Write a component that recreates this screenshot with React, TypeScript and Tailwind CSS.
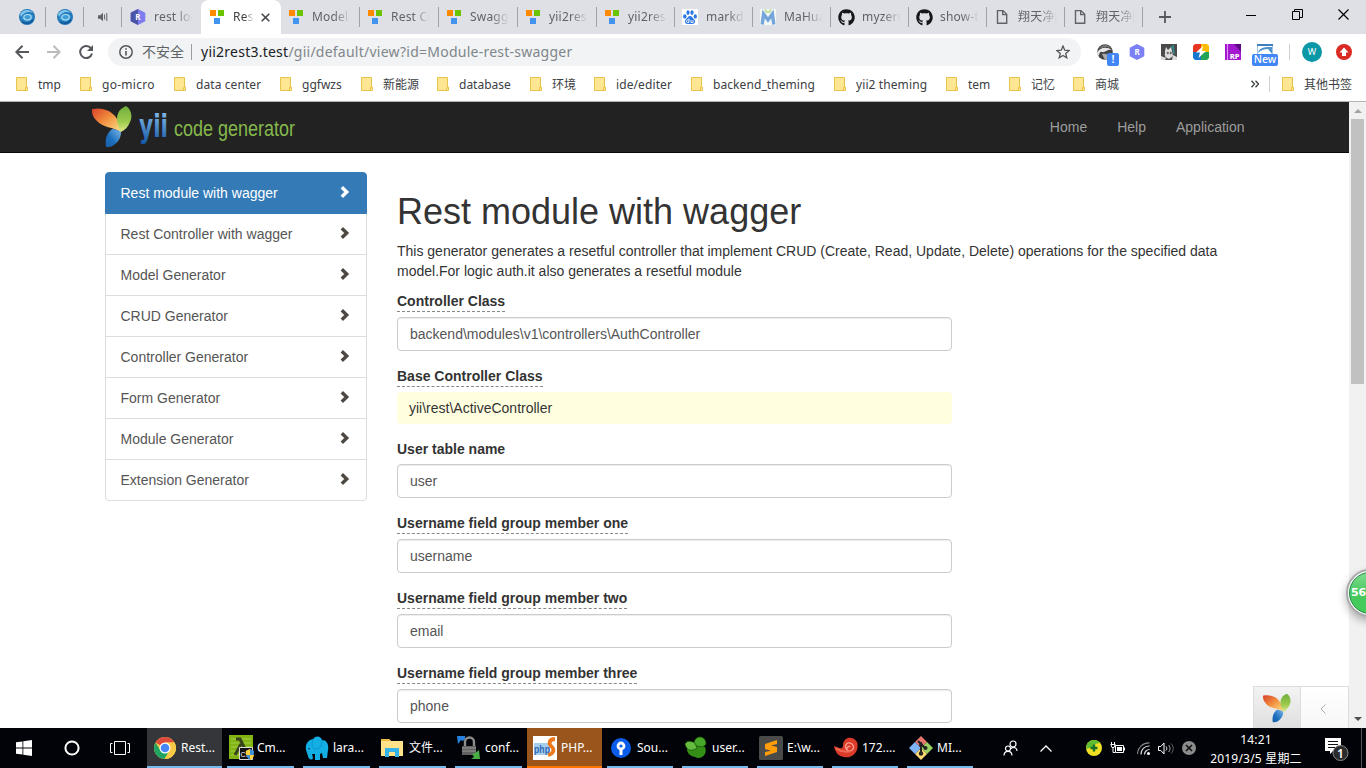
import React from 'react';
import { FaGithub } from 'react-icons/fa';

const UI = "font-['Noto_Sans','Noto_Sans_CJK_SC',sans-serif]";

/* ---------- favicons ---------- */
const Globe = () => (
  <svg width="16" height="16" viewBox="0 0 16 16">
    <circle cx="8" cy="8" r="8" fill="#2478b8" />
    <path d="M1 5C4 0 11 0 14 4C10 2 5 3 2 8Z" fill="#7fc4ec" />
    <path d="M2 10C4 5 10 3 14 7C13 12 8 14 5 11" fill="#3f9bd4" />
    <ellipse cx="8.500" cy="8.200" rx="3.600" ry="2.700" fill="none" stroke="#a9ddf7" strokeWidth="1.200" />
    <path d="M3 13c3 2 8 2 11-2" fill="none" stroke="#0d5597" strokeWidth="1.500" />
  </svg>
);
const Speaker = () => (
  <svg width="12" height="10" viewBox="0 0 12 10">
    <path d="M1 3.2h2.2L6 .8v8.4L3.2 6.8H1z" fill="#5f6368" />
    <path d="M7.6 2.5v5M9.8 1v8" stroke="#5f6368" strokeWidth="1" />
  </svg>
);
const Hex = ({ dark }: { dark?: boolean }) => (
  <svg width="16" height="16" viewBox="0 0 16 16">
    <path d="M8 0l7.300 3.800v8.400L8 16 .7 12.200V3.800z" fill={dark ? '#7e7df0' : '#7b80f5'} />
    {dark && <path d="M8 0L.7 3.800v8.400L8 16z" fill="#4d54a8" />}
    <text x="8" y="11" fontSize="8" fontWeight="700" fill="#fff" textAnchor="middle" fontFamily="Noto Sans">R</text>
  </svg>
);
const Squares = () => (
  <svg width="16" height="16" viewBox="0 0 16 16">
    <path d="M1 1h6v6H1z" fill="#ff8a00" />
    <path d="M9 1h6v6H9z" fill="#6cc400" />
    <path d="M5 9h6v6H5z" fill="#4294ef" />
  </svg>
);
const Paw = () => (
  <svg width="16" height="16" viewBox="0 0 16 16">
    <path d="M0 0h16v16H0z" fill="#fff" />
    <g fill="#2b78e4">
      <ellipse cx="2.800" cy="7.400" rx="1.700" ry="2.200" />
      <ellipse cx="6" cy="3.600" rx="1.600" ry="2.300" />
      <ellipse cx="10" cy="3.600" rx="1.600" ry="2.300" />
      <ellipse cx="13.300" cy="7.400" rx="1.600" ry="2.200" />
      <path d="M8 7c2 0 2.500 2 4 3.300c2 2 1 4.700-1.500 4.700h-5C3 15 2 12.300 4 10.300C5.500 9 6 7 8 7z" />
    </g>
    <path d="M7 9.500v4H5.500c-1.500 0-1.500-2.500 0-2.500H7M9 11v2.500h2V11" fill="none" stroke="#fff" strokeWidth=".9" />
  </svg>
);
const MaHua = () => (
  <svg width="16" height="16" viewBox="0 0 16 16">
    <path d="M0 0h16v16H0z" fill="#f4f8f4" />
    <path d="M5 0l1.500 3h3L11 0" stroke="#c3df9c" strokeWidth="1.800" fill="none" />
    <path d="M2.200 15.500L3.600 5L8 11l4.400-6 1.400 10.500" stroke="#74a6dc" strokeWidth="3.400" fill="none" />
  </svg>
);
const Octo = () => <FaGithub size={17} color="#15171a" />;
const FileIcon = () => (
  <svg width="16" height="16" viewBox="0 0 16 16">
    <path d="M3.500 1.600h5.500l3.700 3.700v9H3.500zM8.700 1.600v4h4" fill="none" stroke="#5f6368" strokeWidth="1.400" />
  </svg>
);

const tabs: [() => React.JSX.Element, string, string][] = [
  [Squares, 'Model', 'w-[79px]'],
  [Squares, 'Rest Co', 'w-[79px]'],
  [Squares, 'Swagg', 'w-[79px]'],
  [Squares, 'yii2rest', 'w-[79px]'],
  [Squares, 'yii2rest', 'w-[78px]'],
  [Paw, 'markd', 'w-[78px]'],
  [MaHua, 'MaHua', 'w-[78px]'],
  [Octo, 'myzero', 'w-[78px]'],
  [Octo, 'show-t', 'w-[78px]'],
  [FileIcon, '翔天净[', 'w-[78px]'],
  [FileIcon, '翔天净[', 'w-[78px]'],
];

const fade = '[mask-image:linear-gradient(to_right,#000_55%,transparent_100%)]';

function TabStrip() {
  return (
    <div className="flex h-[34px] bg-[#dfe0e6] pl-2 text-[12px] tracking-[0.2px] text-[#5f6368]">
      {[Globe, Globe, Speaker].map((I, i) => (
        <div key={i} className="flex w-[38px] shrink-0 items-center">
          <div className="flex w-[38px] justify-center"><I /></div>
          <div className="h-5 w-px shrink-0 bg-[#a0a1a6]" />
        </div>
      ))}
      <div className="flex w-[79px] shrink-0 items-center pl-2">
        <Hex dark />
        <span className={`ml-2 w-[39px] overflow-hidden whitespace-nowrap ${fade}`}>rest loc</span>
      </div>
      <div className="flex w-[80px] shrink-0 items-center rounded-t-lg bg-white pl-2 text-[#3c4043]">
        <Squares />
        <span className={`ml-2 w-[21px] overflow-hidden whitespace-nowrap ${fade}`}>Res</span>
        <svg className="ml-[7px]" width="9" height="9" viewBox="0 0 9 9"><path d="M.7.7l7.600 7.600M8.300.7L.7 8.300" stroke="#45494d" strokeWidth="1.600" /></svg>
      </div>
      {tabs.map(([I, t, w], i) => (
        <div key={i} className={`flex shrink-0 items-center pl-[7px] ${w}`}>
          <div className="flex w-[17px] shrink-0 items-center"><I /></div>
          <span className={`ml-[7px] w-[39px] overflow-hidden whitespace-nowrap ${fade}`}>{t}</span>
          <div className="ml-auto h-5 w-px bg-[#a0a1a6]" />
        </div>
      ))}
      <div className="flex flex-1 items-center">
        <svg className="ml-[16px]" width="12" height="12" viewBox="0 0 12 12"><path d="M6 0v12M0 6h12" stroke="#55585d" strokeWidth="1.800" /></svg>
        <svg className="mb-[5px] ml-auto" width="10" height="10" viewBox="0 0 10 10"><path d="M0 5.500h10" stroke="#000" /></svg>
        <svg className="mb-[5px] ml-9" width="11" height="11" viewBox="0 0 11 11"><path d="M.5 2.500h7v8h-7zM2.500 2.500v-2h8v8h-3" stroke="#000" fill="none" /></svg>
        <svg className="mb-[5px] mr-[17px] ml-[35px]" width="11" height="11" viewBox="0 0 11 11"><path d="M.5.5l10 10M10.500.5l-10 10" stroke="#000" strokeWidth="1.200" /></svg>
      </div>
    </div>
  );
}

function Toolbar() {
  return (
    <div className="flex h-9 shrink-0 items-center bg-white">
      <svg className="ml-[15px]" width="14" height="14" viewBox="0 0 14 14"><path d="M14 7H1.500M7.500.8L1.300 7l6.200 6.200" fill="none" stroke="#55585d" strokeWidth="2" /></svg>
      <svg className="ml-[18px]" width="14" height="14" viewBox="0 0 14 14"><path d="M0 7h12.500M6.500.8L12.700 7l-6.200 6.200" fill="none" stroke="#bbbcbe" strokeWidth="2" /></svg>
      <svg className="ml-[18px]" width="14" height="14" viewBox="0 0 14 14"><path d="M12 3.400A6 6 0 1 0 13 8.500" fill="none" stroke="#55585d" strokeWidth="2" /><path d="M14 0v6H8z" fill="#55585d" /></svg>
      <div className="ml-[15px] flex h-7 w-[973px] items-center rounded-full bg-[#f1f3f4] pl-[11px]">
        <svg width="14" height="14" viewBox="0 0 14 14"><circle cx="7" cy="7" r="6.200" fill="none" stroke="#55585d" strokeWidth="1.500" /><path d="M7 6v4.500M7 3.300v1.500" stroke="#55585d" strokeWidth="1.600" /></svg>
        <span className="-mt-0.5 ml-[9px] w-[42px] whitespace-nowrap text-[14px] text-[#5f6368]">不安全</span>
        <div className="ml-[7px] h-4 w-px bg-[#9b9da1]" />
        <span className="-mt-0.5 ml-[9px] whitespace-nowrap text-[14px] tracking-[0.24px] text-[#80868b]"><span className="text-[#202124]">yii2rest3.test</span>/gii/default/view?id=Module-rest-swagger</span>
        <svg className="mr-[11px] ml-auto" width="14" height="14" viewBox="0 0 14 14"><path d="M7 1l1.700 4.200 4.500.3-3.500 2.900 1.100 4.400L7 10.400l-3.800 2.400 1.100-4.400L.8 5.500l4.500-.3z" fill="none" stroke="#55585d" strokeWidth="1.300" /></svg>
      </div>
      <div className="relative ml-4 size-4">
        <svg width="16" height="16" viewBox="0 0 16 16"><circle cx="8" cy="8" r="7.800" fill="#444" /><path d="M0 9C2 4 9 2 15 6C10 5 8 9 5 8S3 11 1 12z" fill="#e8e8e8" /><path d="M2 5C5 0 11 0 14 4C9 2 6 3 2 5z" fill="#777" /><path d="M5 10c3-1 6 0 8 3L8 16z" fill="#aaa" /></svg>
        <span className="absolute top-[9px] left-[10px] flex h-[13px] w-3 items-center justify-center rounded-[2px] bg-[#4285f4] text-[11px] font-semibold text-white">!</span>
      </div>
      <div className="ml-4"><Hex /></div>
      <svg className="ml-4" width="16" height="16" viewBox="0 0 16 16"><path d="M0 0h16v16H0z" fill="#4a4b49" /><path d="M5 3l2 3 3-3 1 4 1 5-4 3-4-2V7z" fill="#ddd" /><path d="M6 8h1.500v2H6zM9 8h1.500v2H9zM3 10l3 5" fill="#4a4b49" stroke="#888" strokeWidth=".5" /><path d="M0 12l5 2-1 2H0zM12 11l4 2v3h-5z" fill="#ddd" /><path d="M10 4l2-2 1 8" stroke="#328d91" strokeWidth="1.500" fill="none" /></svg>
      <svg className="ml-4" width="16" height="16" viewBox="0 0 16 16"><path d="M2 0h6v8H0V2z" fill="#e63622" /><path d="M8 0h6l2 2v6H8z" fill="#ffbd00" /><path d="M0 8h8v8H2l-2-2z" fill="#1878d0" /><path d="M8 8h8v6l-2 2H8z" fill="#23a455" /><path d="M10 2L3 8.500h4L5.500 14 13 7H9z" fill="#fff" /></svg>
      <svg className="ml-4" width="16" height="16" viewBox="0 0 16 16"><path d="M0 0h16v16H0z" fill="#a319cf" /><path d="M9 0h7v8z" fill="#5b0c83" /><path d="M2.500 0v16" stroke="#f2b5ff" strokeWidth=".8" /><text x="9.700" y="14.500" fontSize="7.500" fontWeight="800" fill="#fff" textAnchor="middle" fontFamily="Noto Sans">RP</text></svg>
      <div className="relative ml-4 size-4">
        <svg width="16" height="16" viewBox="0 0 16 16"><path d="M.5.5h15v12H.5z" fill="#fff" stroke="#9fc3e4" /><path d="M0 0h16v2H0z" fill="#3f7fc0" /><path d="M1 9C2 3 9 3 15 3v7L11 5C7 5 4 6 1 9z" fill="#4f92cc" /></svg>
        <span className="absolute top-[10px] -left-[5px] flex h-3 w-[26px] items-center justify-center rounded-[2px] bg-[#4285f4] text-[10.500px] font-medium text-white">New</span>
      </div>
      <div className="ml-4 h-4 w-px bg-[#cfd0d3]" />
      <div className="ml-3 flex size-5 items-center justify-center rounded-full bg-[#0b98a6] text-[9px] text-white">W</div>
      <svg className="ml-[14px]" width="16" height="16" viewBox="0 0 16 16"><circle cx="8" cy="8" r="8" fill="#d92b23" /><path d="M8 3.500L3.500 8.500H6v3.500h4V8.500h2.500z" fill="#fff" /></svg>
    </div>
  );
}

const Folder = () => (
  <svg className="shrink-0" width="12" height="14" viewBox="0 0 12 14">
    <path d="M.5.500h10v9.500h1v3.500H.5z" fill="#ffe693" stroke="#eac34a" />
    <path d="M9.500 13.500V10.500h1" fill="none" stroke="#eac34a" />
  </svg>
);

const marks: [string, string][] = [
  ['tmp', 'w-[64px]'], ['go-micro', 'w-[94px] tracking-[0.28px]'], ['data center', 'w-[106px] tracking-[0.08px]'], ['ggfwzs', 'w-[81px]'],
  ['新能源', 'w-[76px]'], ['database', 'w-[93px]'], ['环境', 'w-[64px]'], ['ide/editer', 'w-[97px] tracking-[0.1px]'],
  ['backend_theming', 'w-[143px] tracking-[0.08px]'], ['yii2 theming', 'w-[112px] tracking-[0.1px]'], ['tem', 'w-[63px]'], ['记忆', 'w-[64px]'], ['商城', 'w-[64px]'],
];

function Bookmarks() {
  return (
    <div className="flex h-[31px] shrink-0 items-center bg-white pb-[3px] pl-4 text-[12px] text-[#3c4043]">
      {marks.map(([t, w], i) => (
        <div key={i} className={`flex shrink-0 items-center gap-[10px] whitespace-nowrap ${w}`}><Folder /><span className="mt-0.5">{t}</span></div>
      ))}
      <svg className="ml-auto" width="8" height="8" viewBox="0 0 8 8"><path d="M.5.8L3.500 4l-3 3.200M4.500.8L7.500 4l-3 3.200" fill="none" stroke="#3c4043" strokeWidth="1.300" /></svg>
      <div className="mr-3 ml-[10px] h-4 w-px bg-[#cfd0d3]" />
      <div className="flex w-[84px] shrink-0 items-center gap-[10px] whitespace-nowrap"><Folder /><span className="mt-0.5">其他书签</span></div>
    </div>
  );
}

/* ---------- page ---------- */
const YiiLeaves = ({ className, id, w, h }: { className?: string; id: string; w: number; h: number }) => (
  <svg className={className} width={w} height={h} viewBox="0 0 40 41">
    <defs>
      <linearGradient id={`${id}r`} x1="0" y1="0" x2="1" y2="1"><stop offset="0" stopColor="#d8402c" /><stop offset=".45" stopColor="#f08a3c" /><stop offset="1" stopColor="#fde58a" /></linearGradient>
      <linearGradient id={`${id}g`} x1="0" y1="0" x2="0" y2="1"><stop offset="0" stopColor="#6fae3c" /><stop offset=".6" stopColor="#9cca4c" /><stop offset="1" stopColor="#dfe98c" /></linearGradient>
      <linearGradient id={`${id}b`} x1="1" y1="0" x2="0" y2="1"><stop offset="0" stopColor="#7db8e8" /><stop offset=".6" stopColor="#1c6fbd" /><stop offset="1" stopColor="#1a5fa8" /></linearGradient>
    </defs>
    <path d="M0 3C9 1 18 4 23 10C27 15 29 20 29 26C22 21 10 22 4 14C0 10 0 6 0 3z" fill={`url(#${id}r)`} />
    <path d="M34 0C39 3 41 10 38 16C36 21 33 24 29 26C25 19 23 10 28 4C30 2 32 1 34 0z" fill={`url(#${id}g)`} />
    <path d="M29 26C29 32 26 36 23 38C20 41 17 41 14 41C13 34 14 28 20 23C23 23 27 24 29 26z" fill={`url(#${id}b)`} />
  </svg>
);

function Navbar() {
  return (
    <div className="flex h-[51px] w-full shrink-0 border-b border-[#080808] bg-[#222]">
      <YiiLeaves className="mt-1 ml-[92px]" id="a" w={40} h={41} />
      <svg className="ml-[7px]" width="30" height="50" viewBox="0 0 30 50">
        <defs><linearGradient id="yt" x1="0" y1="8" x2="0" y2="42" gradientUnits="userSpaceOnUse"><stop offset="0" stopColor="#8cc0ee" /><stop offset="1" stopColor="#1257a6" /></linearGradient></defs>
        <text x="0" y="34.500" fontSize="32" fontWeight="700" fontFamily="DejaVu Sans" fill="url(#yt)" textLength="29" lengthAdjust="spacingAndGlyphs">yii</text>
      </svg>
      <svg className="ml-1" width="124" height="50" viewBox="0 0 124 50">
        <text x="1" y="34" fontSize="22" fontFamily="Liberation Sans" fill="#86b94b" textLength="121" lengthAdjust="spacingAndGlyphs">code generator</text>
      </svg>
      <div className="mr-[104.5px] ml-auto flex gap-[30px] text-[14px] leading-[50px] text-[#9d9d9d]">
        <span>Home</span><span>Help</span><span>Application</span>
      </div>
    </div>
  );
}

const menu = ['Rest module with wagger', 'Rest Controller with wagger', 'Model Generator', 'CRUD Generator', 'Controller Generator', 'Form Generator', 'Module Generator', 'Extension Generator'];

function Sidebar() {
  return (
    <div className="flex w-[262px] shrink-0 flex-col">
      {menu.map((t, i) => (
        <div
          key={t}
          className={`-mb-px flex h-[42px] items-center justify-between border pr-4 pl-[14.5px] first:rounded-t last:mb-0 last:rounded-b ${i === 0 ? 'relative border-[#337ab7] bg-[#337ab7] text-white' : 'border-[#ddd] text-[#555]'}`}
        >
          {t}
          <svg className={i === 0 ? 'mb-[2px]' : 'mb-[2px] text-[#4d4742]'} width="10" height="12" viewBox="0 0 10 12"><path d="M1.800 1.300L6.700 6l-4.900 4.700" fill="none" stroke="currentColor" strokeWidth="3.400" /></svg>
        </div>
      ))}
    </div>
  );
}

const fields: [string, string, boolean, boolean][] = [
  ['Controller Class', 'backend\\modules\\v1\\controllers\\AuthController', true, false],
  ['Base Controller Class', 'yii\\rest\\ActiveController', true, true],
  ['User table name', 'user', false, false],
  ['Username field group member one', 'username', true, false],
  ['Username field group member two', 'email', true, false],
  ['Username field group member three', 'phone', true, false],
];

function Content() {
  return (
    <div className="ml-[30px] w-[848px] pt-5">
      <h1 className="mb-[10px] text-[36px] leading-[39px] font-medium">Rest module with wagger</h1>
      <p className="mb-[10px]">This generator generates a resetful controller that implement CRUD (Create, Read, Update, Delete) operations for the specified data model.For logic auth.it also generates a resetful module</p>
      {fields.map(([label, value, dashed, sticky]) => (
        <div key={label} className="mb-[15px] flex w-[555px] flex-col items-start">
          <label className={`mb-[5px] font-bold ${dashed ? 'border-b border-dashed border-[#888]' : ''}`}>{label}</label>
          {sticky ? (
            <div className="h-8 w-full rounded bg-[#ffffe0] px-3 py-[6px]">{value}</div>
          ) : (
            <div className="h-[34px] w-full rounded border border-[#ccc] px-3 py-[6px] text-[#555] shadow-[inset_0_1px_1px_rgba(0,0,0,0.075)]">{value}</div>
          )}
        </div>
      ))}
    </div>
  );
}

function Page() {
  return (
    <div className="relative flex h-[626px] shrink-0 overflow-hidden font-['Liberation_Sans',Arial,sans-serif] text-[14px] leading-5 text-[#333]">
      <div className="flex w-[1349px] shrink-0 flex-col bg-white">
        <Navbar />
        <div className="mt-[19px] flex pl-[105px]">
          <Sidebar />
          <Content />
        </div>
      </div>
      <div className="flex w-[17px] shrink-0 flex-col items-center bg-[#f1f1f1]">
        <svg className="mt-[7px]" width="8" height="4" viewBox="0 0 8 4"><path d="M4 0l4 4H0z" fill="#a3a3a3" /></svg>
        <div className="mt-[6px] h-[265px] w-[13px] bg-[#c1c1c1]" />
        <svg className="mt-auto mb-[7px]" width="8" height="4" viewBox="0 0 8 4"><path d="M4 4L0 0h8z" fill="#505050" /></svg>
      </div>
      <div className="absolute right-[17px] bottom-0 flex h-[42px] w-[96px] border border-b-0 border-[#ddd]">
        <div className="flex w-[47px] items-center justify-center border-r border-[#ddd] bg-gradient-to-b from-[#f3f3f3] to-[#dfdfdf]"><YiiLeaves id="b" w={28} h={30} /></div>
        <div className="flex flex-1 items-center justify-center bg-gradient-to-b from-white to-[#f7f7f7]"><svg className="mr-[3px] mt-[3px]" width="6" height="10" viewBox="0 0 6 10"><path d="M5.500.5L1 5l4.500 4.500" fill="none" stroke="#aaa" /></svg></div>
      </div>
      <div className="absolute top-[467px] left-[1346px] size-12 rounded-full border-[2px] border-[#aaa] bg-white p-[1px] shadow-[0_4px_8px_rgba(0,0,0,0.3)]">
        <div className="flex size-full items-center rounded-full border border-[#1d8b45] bg-gradient-to-b from-[#7edb8f] via-[#47c85e] to-[#43cd58] pl-[1px] font-['DejaVu_Sans',sans-serif] text-[11px] font-bold tracking-tight text-white">56</div>
      </div>
    </div>
  );
}

/* ---------- taskbar ---------- */
const Chrome = () => (
  <svg width="24" height="24" viewBox="0 0 24 24"><circle cx="12" cy="12" r="11" fill="#f7cb45" /><path d="M12 12L2.500 6.500A11 11 0 0 1 21.500 6.500H12z" fill="#dd4b3e" /><path d="M2.500 6.500A11 11 0 0 0 11.500 23L16.500 14.500 12 12 7.500 14.500z" fill="#1fa463" /><path d="M12 6.500h9.500A11 11 0 0 1 11.500 23l5-8.500z" fill="#f7cb45" /><circle cx="12" cy="12" r="5.500" fill="#fff" /><circle cx="12" cy="12" r="4.300" fill="#4587f3" /></svg>
);
const Cmder = () => (
  <svg width="26" height="26" viewBox="0 0 26 26"><path d="M0 0h24v24H0z" fill="#82b414" /><path d="M2 4h20M2 8h20M2 12h20M2 16h20M2 20h20" stroke="#a4cf4a" /><path d="M7 4h4l8 16M12 9L6 20" fill="none" stroke="#37431d" strokeWidth="3" /><path d="M10.500 12.500h13v12h-13z" fill="#111" stroke="#ddd" /><text x="11.500" y="22" fontSize="7" fill="#fff" fontFamily="Liberation Sans">C:\</text><path d="M17 16l4-2 4 2c0 5-1 7-4 9c-3-2-4-4-4-9z" fill="#3f91d8" /><path d="M21 14v6h-4l-.2-4zM21 20h4c-.5 3-2 4-4 5z" fill="#ffd13b" /></svg>
);
const Elephant = () => (
  <svg width="24" height="24" viewBox="0 0 24 24"><path d="M1 14C0 8 3 4 8 3C11-1 16 0 17 4C22 4 24 9 23 14L22 22h-4l-1-5-2 1v6h-5v-6H7l1 4c-1 3-5 1-5-2z" fill="#12aee4" /><path d="M8 3C6 8 7 14 12 13C17 12 17 7 17 4" fill="none" stroke="#0c93ca" /><path d="M4 12v1.500" stroke="#064c70" strokeWidth="1.500" /></svg>
);
const Explorer = () => (
  <svg width="24" height="24" viewBox="0 0 24 24"><path d="M0 3h8l2 2h12v15H0z" fill="#ffe28a" /><path d="M0 3h8l2 2H0z" fill="#f0b942" /><path d="M4 12h14v9h-4v-5H8v5H4z" fill="#35b4ea" /></svg>
);
const Lock = () => (
  <svg width="24" height="24" viewBox="0 0 24 24"><path d="M0 0h8v3L6 5l-2-1-3 4z" fill="#2583df" /><path d="M8 10V6a4 4 0 0 1 9 0v4" fill="none" stroke="#8d8d8d" strokeWidth="2.400" /><path d="M5 10h14v9H5z" fill="#606060" /><path d="M5 12h14M5 15h14" stroke="#999" /><path d="M22 14l1 9h-9l3-2-2-3 3-1z" fill="#48ae45" /></svg>
);
const PhpStorm = () => (
  <svg width="24" height="24" viewBox="0 0 24 24"><path d="M0 0h24v24H0z" fill="#fff" /><path d="M1 7h16v12H1z" fill="#a5cdec" /><text x="1" y="17" fontSize="11" fontWeight="700" fill="#346ab5" fontFamily="Liberation Sans" textLength="16" lengthAdjust="spacingAndGlyphs">php</text><path d="M22 3c-6 0-7 5-3 8c3 3 1 7-4 8" stroke="#ef781b" strokeWidth="3.800" fill="none" /></svg>
);
const Source = () => (
  <svg width="24" height="24" viewBox="0 0 24 24"><circle cx="12" cy="12" r="10" fill="#0b5ce8" /><path d="M10.500 13h3v6h-3z" fill="#fff" /><circle cx="12" cy="10" r="3" fill="#0b5ce8" stroke="#fff" strokeWidth="2.800" /></svg>
);
const Navicat = () => (
  <svg width="24" height="24" viewBox="0 0 24 24"><path d="M3 13c5-6 14-5 18-2c3 8-4 13-10 10c-5-1-8-4-8-8z" fill="#348f17" /><path d="M10 7c1-8 11-8 12 0c0 5-10 5-12 0z" fill="#48a829" stroke="#145004" strokeWidth=".7" /><path d="M1 8c2-4 6-3 10-1l2 5c-4 3-10 4-12-4z" fill="#66bc3f" stroke="#145004" strokeWidth=".7" /></svg>
);
const Sublime = () => (
  <svg width="24" height="24" viewBox="0 0 24 24"><rect width="24" height="24" rx="1.500" fill="#4a4a49" /><path d="M18 4L6 8v5l6 1.800L6 16v4l12-4v-5l-6-1.600L18 8z" fill="#ff9c0a" /></svg>
);
const Nautilus = () => (
  <svg width="24" height="24" viewBox="0 0 24 24"><path d="M0 10c5 2 9 4 9-1C9 1 19-1 23 6c3 9-5 17-13 15C4 20 1 16 0 10z" fill="#dd3b29" /><path d="M13 14c-4-5 1-9 5-6c4 4-1 9-5 6c-1-2 2-5 3-3" fill="none" stroke="#ffa192" strokeWidth="1.300" /><path d="M2 12c5 4 11 4 15 3" stroke="#f06c59" strokeWidth="2" fill="none" /></svg>
);
const Git = () => (
  <svg width="24" height="24" viewBox="0 0 24 24"><path d="M12 0l6 6-6 6-6-6z" fill="#e8766f" /><path d="M18 6l6 6-6 6-6-6z" fill="#9bd163" /><path d="M12 12l6 6-6 6-6-6z" fill="#ffdb73" /><path d="M6 6l6 6-6 6-6-6z" fill="#7fb3f7" /><path d="M12 6v12M9 5l7 7" stroke="#222" strokeWidth="2" /><circle cx="12" cy="17.500" r="2.200" fill="#222" /><circle cx="16.500" cy="12" r="2" fill="#222" /><circle cx="12" cy="9" r="2" fill="#222" /></svg>
);

const blue = 'border-[#76b9ed]';
const tasks: [() => React.JSX.Element, string, string][] = [
  [Chrome, 'Rest...', `ml-[17px] w-[75px] pl-[6px] bg-[#35363a] ${blue}`],
  [Cmder, 'Cm...', `ml-[5px] w-[67px] pl-[2px] ${blue}`],
  [Elephant, 'lara...', `ml-[9px] w-[67px] pl-[2px] ${blue}`],
  [Explorer, '文件...', `ml-[9px] w-[67px] pl-[2px] ${blue}`],
  [Lock, 'conf...', `ml-[9px] w-[67px] pl-[2px] ${blue}`],
  [PhpStorm, 'PHP...', 'ml-[5px] w-[75px] pl-[6px] bg-[#9a551d] border-[#ff7300]'],
  [Source, 'Sou...', `ml-[5px] w-[66px] pl-[2px] ${blue}`],
  [Navicat, 'user...', `ml-[9px] w-[66px] pl-[2px] ${blue}`],
  [Sublime, 'E:\\w...', `ml-[9px] w-[66px] pl-[2px] ${blue}`],
  [Nautilus, '172....', `ml-[9px] w-[66px] pl-[2px] ${blue}`],
  [Git, 'MI...', `ml-[9px] w-[66px] pl-[2px] ${blue}`],
];

function Taskbar() {
  return (
    <div className="flex h-10 shrink-0 items-center bg-[#010308] text-[12px] text-white">
      <svg className="ml-4 shrink-0" width="16" height="16" viewBox="0 0 16 16"><path d="M0 2.300L6.500 1.400v6.200H0zM7.300 1.300L16 0v7.600H7.300zM0 8.400h6.500v6.200L0 13.700zM7.300 8.400H16V16l-8.700-1.300z" fill="#fff" /></svg>
      <svg className="ml-8 shrink-0" width="16" height="16" viewBox="0 0 16 16"><circle cx="8" cy="8" r="6.600" fill="none" stroke="#fff" strokeWidth="2" /></svg>
      <svg className="ml-[30px] shrink-0" width="20" height="14" viewBox="0 0 20 14"><path d="M4.500.5h11v13h-11zM2.500 2.500h-2v9h2M17.500 2.500h2v9h-2" fill="none" stroke="#fff" /></svg>
      {tasks.map(([I, t, c], i) => (
        <div key={i} className={`flex h-10 shrink-0 items-center whitespace-nowrap border-b-2 ${c}`}>
          <div className="mt-0.5 w-[26px] shrink-0"><I /></div>
          <span className="mt-0.5 ml-[2px]">{t}</span>
        </div>
      ))}
      <svg className="ml-[30px] shrink-0" width="15" height="16" viewBox="0 0 15 16"><circle cx="10" cy="4" r="3" fill="none" stroke="#fff" strokeWidth="1.200" /><path d="M8 8.500c3-2 6-1 6 2.500" fill="none" stroke="#fff" strokeWidth="1.200" /><circle cx="5" cy="8.500" r="2.500" fill="none" stroke="#fff" strokeWidth="1.200" /><path d="M1 15.500c0-5.500 8-5.500 8 0" fill="none" stroke="#fff" strokeWidth="1.200" /></svg>
      <svg className="ml-[22px] shrink-0" width="12" height="7" viewBox="0 0 12 7"><path d="M.5 6.500L6 1l5.500 5.500" fill="none" stroke="#fff" strokeWidth="1.300" /></svg>
      <svg className="ml-[34px] shrink-0" width="16" height="16" viewBox="0 0 16 16"><circle cx="8" cy="8" r="8" fill="#f0df24" /><path d="M1 4c3-5 10-5 13-1c-3 0-6 1-7 4L0 9z" fill="#5fbd34" /><path d="M8 4.500v7M4.500 8h7" stroke="#197127" strokeWidth="2.400" /></svg>
      <svg className="ml-2 shrink-0" width="16" height="12" viewBox="0 0 16 12"><path d="M5.500 3.500h8v7h-8z" fill="none" stroke="#fff" /><path d="M7 5h5v4H7z" fill="#fff" /><path d="M14.500 5.500v3M1.500 0v2M4.500 0v2M.5 2.500h5M1 3l1 2.500h2L5 3M3 5v5.500h2" fill="none" stroke="#fff" /></svg>
      <svg className="ml-[11px] shrink-0" width="13" height="13" viewBox="0 0 13 13"><g fill="none" stroke="#ddd" strokeWidth="1.200"><path d="M.5 12A11.500 11.500 0 0 1 12.500.8" opacity=".6" /><path d="M4 12.500A8 8 0 0 1 12.500 4" /><path d="M7.500 12.500a5 5 0 0 1 5-5" /></g><circle cx="11.500" cy="11.500" r="1.500" fill="#fff" /></svg>
      <svg className="ml-2 shrink-0" width="16" height="13" viewBox="0 0 16 13"><path d="M.5 4.500h2.300L6 1v11L2.800 8.500H.5zM8 4.500c1 1 1 3 0 4" fill="none" stroke="#fff" /><path d="M10.500 3c2 2 2 5 0 7" fill="none" stroke="#bbb" /><path d="M13 1.500c3 3 3 7 0 10" fill="none" stroke="#666" /></svg>
      <svg className="ml-2 shrink-0" width="14" height="14" viewBox="0 0 14 14"><circle cx="7" cy="7" r="7" fill="#8c8c8c" /><path d="M4 4l6 6M10 4l-6 6" stroke="#111" strokeWidth="1.600" /></svg>
      <div className="mt-px ml-[10px] flex w-[100px] shrink-0 flex-col items-center leading-[19px] tracking-[0.2px] whitespace-nowrap"><span>14:21</span><span>2019/3/5 星期二</span></div>
      <svg className="ml-[19px] shrink-0" width="25" height="26" viewBox="0 0 25 26"><path d="M0 3h16v13H8l-3 3v-3H0z" fill="#fff" /><path d="M3 6.500h10M3 9.500h10M3 12.500h7" stroke="#111" /><circle cx="15.500" cy="18" r="7.500" fill="#2b2b2b" stroke="#888" /><text x="15.500" y="22.500" fontSize="12" fontWeight="600" fill="#fff" textAnchor="middle" fontFamily="Noto Sans">1</text></svg>
      <div className="mr-1 ml-auto h-10 w-px bg-[#54565a]" />
    </div>
  );
}

export default function App() {
  return (
    <div className={`flex h-[768px] w-[1366px] flex-col overflow-hidden bg-white ${UI}`}>
      <TabStrip />
      <Toolbar />
      <Bookmarks />
      <div className="h-px shrink-0 bg-[#b3b3b3]" />
      <Page />
      <Taskbar />
    </div>
  );
}
